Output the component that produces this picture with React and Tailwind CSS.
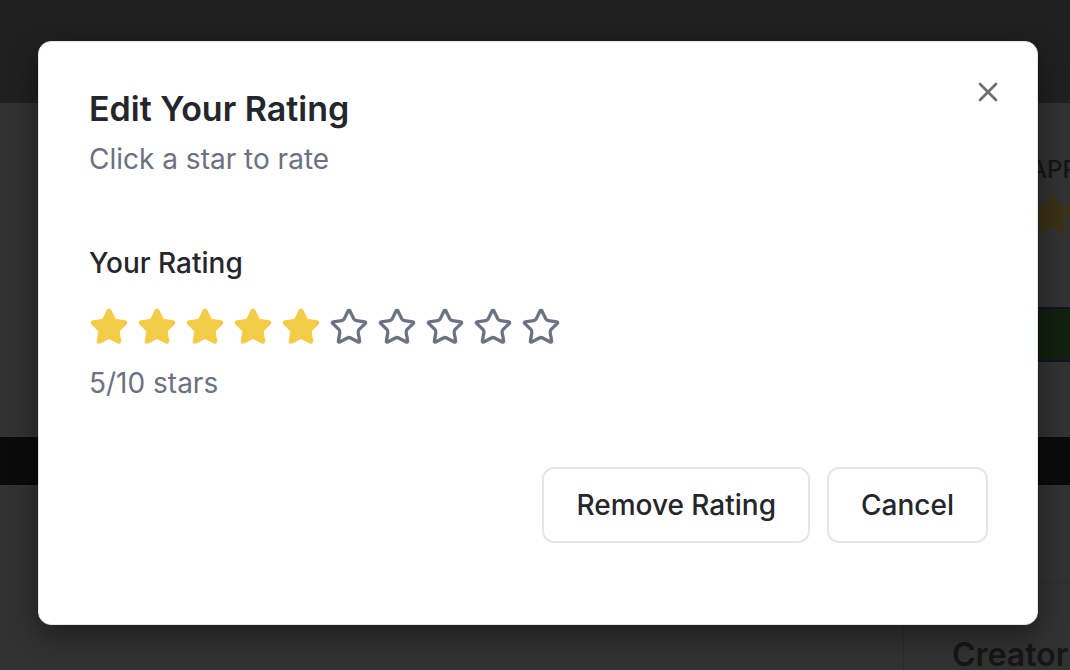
import { Star, X } from 'lucide-react'

const rating = 5

function Backdrop() {
  return (
    <div className="absolute inset-0 flex flex-col bg-[#323232]">
      <div className="h-[103px] shrink-0 bg-[#202020]" />
      <div className="flex h-[334px] shrink-0 justify-end">
        <div className="flex w-[40px] flex-col pt-[49px]">
          <span className="text-[24px] font-medium leading-[36px] text-[#151515]">APP</span>
          <Star size={44} className="mt-[4px] fill-[#3a3116] text-[#3a3116]" />
          <div className="mt-[71px] h-[55px] border-y-2 border-[#15112c] bg-[#11200f]" />
        </div>
      </div>
      <div className="h-[48px] shrink-0 bg-[#0b0b0b]" />
      <div className="flex min-h-0 flex-1 justify-end">
        <div className="mt-[97px] flex w-[167px] flex-col border-l border-t border-[#2c2c2c] pl-[48px] pt-[56px]">
          <span className="text-[32px] font-semibold leading-none text-[#161616]">Creator</span>
        </div>
      </div>
    </div>
  )
}

export default function App() {
  return (
    <div className="relative h-[670px] w-[1070px] overflow-hidden" style={{ fontFamily: 'Inter, "Noto Sans", sans-serif' }}>
      <Backdrop />

      {/* ===== RATING DIALOG ===== */}
      <div className="absolute left-[38px] top-[41px] flex h-[584px] w-[1000px] flex-col rounded-[13px] border border-[#e4e5e9] bg-white pl-[50px] pr-[49px] pt-[51px] shadow-[0_10px_30px_rgba(0,0,0,0.45)]">
        <button className="absolute right-[33px] top-[34px] text-[#6b6e76]">
          <X size={32} strokeWidth={2} />
        </button>

        <h2 className="text-[34px] font-semibold leading-[32px] text-[#24262c]">Edit Your Rating</h2>
        <p className="mt-[18px] text-[28px] leading-[32px] text-[#6b7180]">Click a star to rate</p>

        <p className="mt-[72px] text-[28px] font-medium leading-[32px] text-[#24262c]">Your Rating</p>
        <div className="mt-[28px] flex gap-[8px]">
          {Array.from({ length: 10 }).map((_, i) => (
            <button key={i} className="h-[40px] w-[40px]">
              <Star
                size={40}
                strokeWidth={2}
                className={i < rating ? 'fill-[#f4cd48] text-[#f4cd48]' : 'fill-none text-[#6b7280]'}
              />
            </button>
          ))}
        </div>
        <p className="mt-[20px] text-[28px] leading-[32px] text-[#6b7180]">{rating}/10 stars</p>

        <div className="mt-[68px] flex justify-end gap-[17px]">
          <button className="h-[76px] rounded-[12px] border-2 border-[#e5e6e8] px-[32px] text-[28px] font-medium text-[#24262c]">
            Remove Rating
          </button>
          <button className="h-[76px] rounded-[12px] border-2 border-[#e5e6e8] px-[32px] text-[28px] font-medium text-[#24262c]">
            Cancel
          </button>
        </div>
      </div>
    </div>
  )
}
